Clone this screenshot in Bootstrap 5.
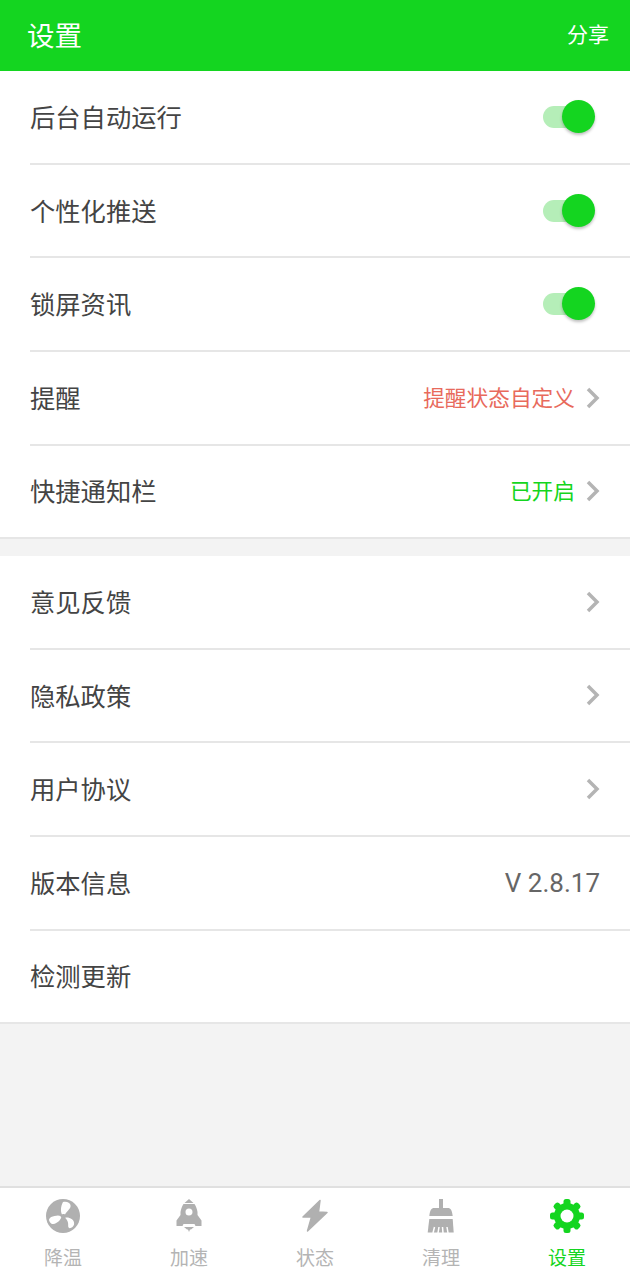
<!DOCTYPE html>
<html lang="zh">
<head>
    <meta charset="UTF-8">
    <meta name="viewport" content="width=device-width, initial-scale=1.0">
    <title>设置</title>
    <link href="https://cdn.jsdelivr.net/npm/bootstrap@5.3.0/dist/css/bootstrap.min.css" rel="stylesheet">
    <style>
        body {
            font-family: Roboto, "Noto Sans CJK SC", sans-serif;
            background: #f3f3f3;
            height: 1280px;
            overflow: hidden;
        }
        .top-bar { height: 71px; background: #14d520; color: #fff; padding: 0 21px 0 27px; }
        .top-title { font-size: 27.5px; padding-top: 2px; }
        .top-share { font-size: 21px; }
        .set-group { background: #fff; border-bottom: 2px solid #e6e6e6; }
        .set-row { height: 93.7px; margin-left: 30px; padding-right: 30px; font-size: 25.3px; color: #444; border-bottom: 2px solid #e6e6e6; }
        .set-row:last-child { border-bottom: 0; height: 91.2px; }
        .set-name { padding-top: 4px; }
        .set-gap { height: 17px; }
        .set-val { font-size: 21.7px; margin-right: 11px; padding-top: 2px; }
        .val-red { color: #e86a5c; }
        .val-green { color: #14d520; }
        .val-ver { font-size: 26px; color: #666; margin-right: 0; }
        .chev { width: 14px; height: 22px; fill: none; stroke: #b4b4b4; stroke-width: 3.5; }
        .sw { width: 52px; height: 34px; margin-right: 5px; }
        .sw-track { left: 0; top: 6px; width: 40px; height: 22px; border-radius: 11px; background: #b5eeb8; }
        .sw-knob { right: 0; top: 0; width: 33px; height: 33px; border-radius: 50%; background: #14d520; box-shadow: 0 2px 3px rgba(0,0,0,.25); }
        .tab-bar { height: 94px; background: #fff; border-top: 2px solid #e0e0e0; }
        .tab-item { width: 126px; padding-top: 10px; color: #b4b4b4; font-size: 19px; line-height: 26px; }
        .tab-item svg { width: 36px; height: 36px; fill: #b0b0b0; margin-bottom: 12px; }
        .tab-on { color: #14d520; }
        .tab-item.tab-on svg { fill: #14d520; }
    </style>
</head>
<body class="d-flex flex-column">
    <div class="top-bar d-flex justify-content-between align-items-center">
        <span class="top-title">设置</span>
        <span class="top-share">分享</span>
    </div>

    <div class="set-group">
        <div class="set-row d-flex justify-content-between align-items-center">
            <span class="set-name">后台自动运行</span>
            <div class="sw position-relative"><div class="sw-track position-absolute"></div><div class="sw-knob position-absolute"></div></div>
        </div>
        <div class="set-row d-flex justify-content-between align-items-center">
            <span class="set-name">个性化推送</span>
            <div class="sw position-relative"><div class="sw-track position-absolute"></div><div class="sw-knob position-absolute"></div></div>
        </div>
        <div class="set-row d-flex justify-content-between align-items-center">
            <span class="set-name">锁屏资讯</span>
            <div class="sw position-relative"><div class="sw-track position-absolute"></div><div class="sw-knob position-absolute"></div></div>
        </div>
        <div class="set-row d-flex align-items-center">
            <span class="set-name me-auto">提醒</span>
            <span class="set-val val-red">提醒状态自定义</span>
            <svg class="chev" viewBox="0 0 14 22"><path d="M2 2l9 9-9 9"/></svg>
        </div>
        <div class="set-row d-flex align-items-center">
            <span class="set-name me-auto">快捷通知栏</span>
            <span class="set-val val-green">已开启</span>
            <svg class="chev" viewBox="0 0 14 22"><path d="M2 2l9 9-9 9"/></svg>
        </div>
    </div>

    <div class="set-gap"></div>

    <div class="set-group">
        <div class="set-row d-flex justify-content-between align-items-center">
            <span class="set-name">意见反馈</span>
            <svg class="chev" viewBox="0 0 14 22"><path d="M2 2l9 9-9 9"/></svg>
        </div>
        <div class="set-row d-flex justify-content-between align-items-center">
            <span class="set-name">隐私政策</span>
            <svg class="chev" viewBox="0 0 14 22"><path d="M2 2l9 9-9 9"/></svg>
        </div>
        <div class="set-row d-flex justify-content-between align-items-center">
            <span class="set-name">用户协议</span>
            <svg class="chev" viewBox="0 0 14 22"><path d="M2 2l9 9-9 9"/></svg>
        </div>
        <div class="set-row d-flex justify-content-between align-items-center">
            <span class="set-name">版本信息</span>
            <span class="set-val val-ver">V 2.8.17</span>
        </div>
        <div class="set-row d-flex justify-content-between align-items-center">
            <span class="set-name">检测更新</span>
        </div>
    </div>

    <div class="tab-bar d-flex mt-auto">
        <div class="tab-item text-center">
            <svg class="d-block mx-auto" viewBox="0 0 36 36">
                <circle cx="18" cy="18" r="17"/>
                <path fill="#fff" d="M18 4c3.500-1 7 .5 7.500 3c.5 2.500-1 3.500-2 5c-1.500 1.700-2.500 2.500-3.500 4.500c-1-.6-2-.6-3 0c-1.500-3-1.500-8 1-12.500z"/>
                <path fill="#fff" d="M15.500 18c-2-1-4-.5-6 0c-2.500.5-4.500 1-5.500 3.500c0 2 2 4.500 3.500 4.500c2.500.5 4.500-1.500 6-2.500c1.500-1.500 2.500-3 2.800-4c-.5-.4-.8-.9-.8-1.500z"/>
                <path fill="#fff" d="M20 19.800c1.500 1 2.500 3 3 5c.5 2.500-.5 4.500 1.500 5.500c2.500-.5 4-2 4.500-3.500c.5-2.500-.5-4.500-2-5.500c-2-1.500-4-2-6-1.800c-.2.200-.7.200-1 .300z"/>
            </svg>
            降温
        </div>
        <div class="tab-item text-center">
            <svg class="d-block mx-auto" viewBox="0 0 36 36"><path fill-rule="evenodd" d="M18 1l4.500 4h-9zM12.500 6h11c1.500 2 2.500 5 3 8v3l4 5.500v5.500h-6l-1-2h-11l-1 2h-6v-5.500l4-5.500v-3c.5-3 1.500-6 3-8zM18 10.500a3.500 3.500 0 1 0 0 7a3.500 3.500 0 0 0 0-7zM13 29h10l-3 2.500h-1l-1 2.500-1-2.500h-1z"/></svg>
            加速
        </div>
        <div class="tab-item text-center">
            <svg class="d-block mx-auto" viewBox="0 0 36 36"><path stroke="#b0b0b0" stroke-width="1.500" stroke-linejoin="round" d="M23 2.500L6 19h8.500L10.500 33 30 14.500l-8.500-.500z"/></svg>
            状态
        </div>
        <div class="tab-item text-center">
            <svg class="d-block mx-auto" viewBox="0 0 36 36">
                <path d="M16 1h4v9h5c2.500 0 4 2 4.700 8H6.300C7 12 8.500 10 11 10h5z"/>
                <path d="M6.300 21h23.400l1 13.500H4.700z"/>
                <path fill="none" stroke="#fff" stroke-width="1.500" d="M10 35l1.500-6M15 35l1-6M20 35l-.5-6M25 35l-1-6"/>
            </svg>
            清理
        </div>
        <div class="tab-item tab-on text-center">
            <svg class="d-block mx-auto" viewBox="0 0 36 36">
                <circle cx="18" cy="18" r="13"/>
                <g>
                    <rect x="14.500" y="1" width="7" height="8" rx="2.500"/>
                    <rect x="14.500" y="1" width="7" height="8" rx="2.500" transform="rotate(45 18 18)"/>
                    <rect x="14.500" y="1" width="7" height="8" rx="2.500" transform="rotate(90 18 18)"/>
                    <rect x="14.500" y="1" width="7" height="8" rx="2.500" transform="rotate(135 18 18)"/>
                    <rect x="14.500" y="1" width="7" height="8" rx="2.500" transform="rotate(180 18 18)"/>
                    <rect x="14.500" y="1" width="7" height="8" rx="2.500" transform="rotate(225 18 18)"/>
                    <rect x="14.500" y="1" width="7" height="8" rx="2.500" transform="rotate(270 18 18)"/>
                    <rect x="14.500" y="1" width="7" height="8" rx="2.500" transform="rotate(315 18 18)"/>
                </g>
                <circle cx="18" cy="18" r="6.500" fill="#fff"/>
            </svg>
            设置
        </div>
    </div>

    <script src="https://cdn.jsdelivr.net/npm/bootstrap@5.3.0/dist/js/bootstrap.bundle.min.js"></script>
</body>
</html>
